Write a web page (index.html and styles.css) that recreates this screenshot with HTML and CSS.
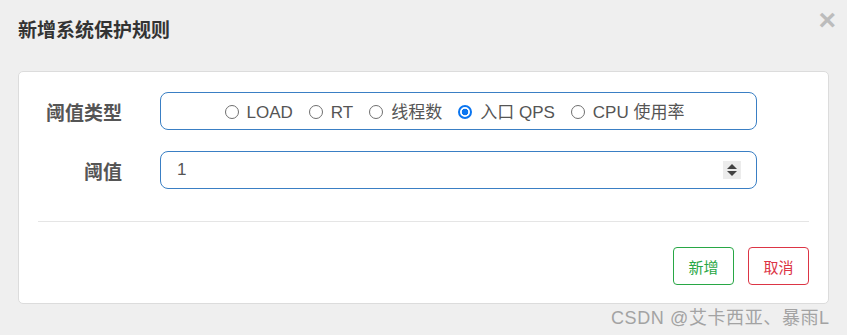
FILE: index.html
```html
<!DOCTYPE html>
<html lang="zh-CN">
<head>
    <meta charset="UTF-8">
    <title>新增系统保护规则</title>
    <link rel="stylesheet" href="styles.css">
</head>
<body>

    <div class="modal">
        <div class="modal-header">
            <h4 class="modal-title">新增系统保护规则</h4>
            <button class="close">&times;</button>
        </div>

        <div class="card">
            <div class="form-row">
                <label class="form-label">阈值类型</label>
                <div class="form-box radio-group">
                    <label class="radio"><input type="radio" name="grade"> LOAD</label>
                    <label class="radio"><input type="radio" name="grade"> RT</label>
                    <label class="radio"><input type="radio" name="grade"> 线程数</label>
                    <label class="radio"><input type="radio" name="grade" checked> 入口 QPS</label>
                    <label class="radio"><input type="radio" name="grade"> CPU 使用率</label>
                </div>
            </div>
            <div class="form-row">
                <label class="form-label">阈值</label>
                <div class="number-wrap">
                    <input class="form-box form-input" type="number" value="1">
                    <span class="spinner"><i class="up"></i><i class="down"></i></span>
                </div>
            </div>

            <div class="divider"></div>

            <div class="footer">
                <button class="btn btn-ok">新增</button>
                <button class="btn btn-cancel">取消</button>
            </div>
        </div>
    </div>

    <div class="watermark">CSDN @艾卡西亚、暴雨L</div>

</body>
</html>
```

FILE: styles.css
```css
body {
    margin: 0;
    background: #efefef;
    font-family: "Liberation Sans", "Noto Sans CJK SC", sans-serif;
    color: #555;
    width: 847px;
    height: 335px;
    overflow: hidden;
    position: relative;
}

.modal-header {
    display: flex;
    justify-content: space-between;
    align-items: flex-start;
    padding: 19px 11px 0 18px;
    height: 52px;
}

.modal-title {
    margin: 0;
    font-size: 19px;
    line-height: 24px;
    font-weight: bold;
    color: #333;
}

.close {
    margin-top: -14px;
    padding: 0;
    border: none;
    background: none;
    font-family: "Liberation Sans", sans-serif;
    font-size: 30px;
    font-weight: bold;
    line-height: 1;
    color: #bcbcbc;
    cursor: pointer;
}

.card {
    margin: 0 18px;
    width: 811px;
    height: 233px;
    background: #fff;
    border: 1px solid #dcdcdc;
    border-radius: 5px;
    padding: 20px 19px 0 19px;
    box-sizing: border-box;
}

.form-row {
    display: grid;
    grid-template-columns: 84px 597px;
    column-gap: 38px;
    align-items: center;
    margin-bottom: 21px;
}

.form-label {
    text-align: right;
    font-size: 19px;
    font-weight: bold;
    color: #555;
}

.form-box {
    height: 38px;
    box-sizing: border-box;
    border: 1px solid #3a7fc4;
    border-radius: 8px;
    background: #fff;
}

.radio-group {
    display: flex;
    align-items: center;
    justify-content: center;
    gap: 16px;
    padding: 2px 8px 0 0;
}

.radio {
    display: flex;
    align-items: center;
    gap: 4px;
    font-size: 17px;
    line-height: 1;
    color: #555;
}

.radio input {
    appearance: none;
    margin: 0 4px 1px 0;
    width: 14px;
    height: 14px;
    border: 1px solid #6f6f6f;
    border-radius: 50%;
    background: #fff;
    box-sizing: border-box;
}

.radio input:checked {
    border: 2px solid #0a75f0;
    background: radial-gradient(circle, #0a75f0 0 3px, #fff 3.6px);
}

.number-wrap {
    position: relative;
}

.form-input {
    display: block;
    width: 100%;
    padding: 0 12px 0 16px;
    font-family: "Liberation Sans", sans-serif;
    font-size: 17px;
    color: #555;
    outline: none;
}

.form-input::-webkit-inner-spin-button {
    display: none;
}

.spinner {
    position: absolute;
    left: 563px;
    top: 10px;
    width: 18px;
    height: 18px;
    background: #ececec;
    display: flex;
    flex-direction: column;
    align-items: center;
    justify-content: center;
    gap: 2px;
}

.spinner i {
    width: 0;
    height: 0;
    border-left: 5px solid transparent;
    border-right: 5px solid transparent;
}

.spinner .up {
    border-bottom: 5px solid #444;
}

.spinner .down {
    border-top: 5px solid #444;
}

.divider {
    height: 1px;
    background: #e5e5e5;
    margin-top: 32px;
}

.footer {
    display: flex;
    justify-content: flex-end;
    gap: 14px;
    margin-top: 25px;
}

.btn {
    width: 61px;
    height: 38px;
    background: #fff;
    border: 1px solid;
    border-radius: 4px;
    font-family: "Liberation Sans", "Noto Sans CJK SC", sans-serif;
    font-size: 15px;
    cursor: pointer;
}

.btn-ok {
    color: #28a745;
    border-color: #28a745;
}

.btn-cancel {
    color: #dc3545;
    border-color: #dc3545;
}

.watermark {
    position: absolute;
    left: 611px;
    top: 303px;
    font-size: 18px;
    letter-spacing: 0.6px;
    color: #a3a3a3;
    white-space: nowrap;
}
```
